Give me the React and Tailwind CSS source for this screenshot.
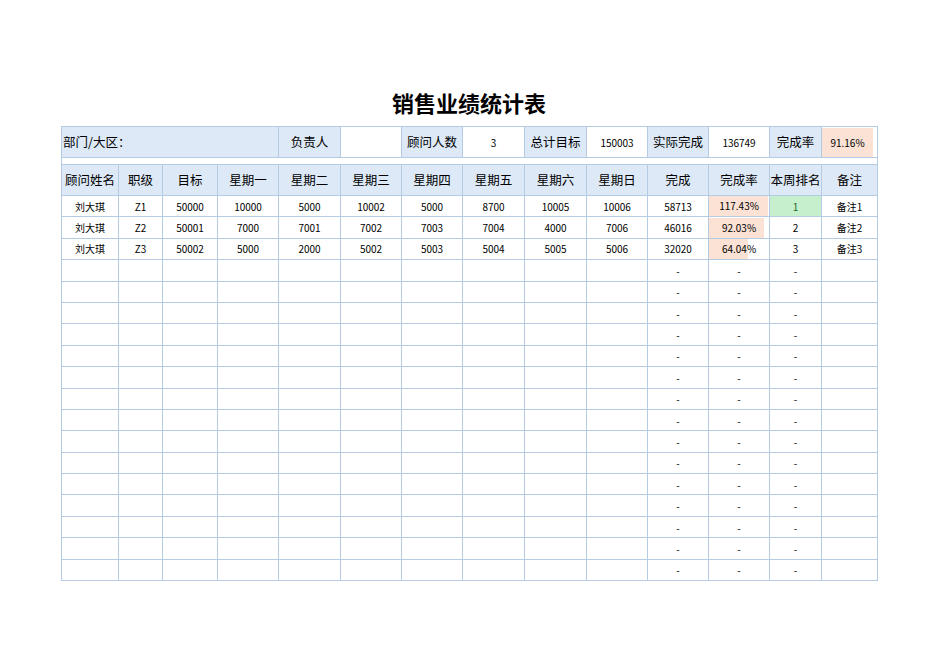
const W = [57, 44, 55, 61, 62, 61, 61, 62, 62, 61, 61, 61, 52, 56];
const HEAD = ["顾问姓名", "职级", "目标", "星期一", "星期二", "星期三", "星期四", "星期五", "星期六", "星期日", "完成", "完成率", "本周排名", "备注"];
const DATA = [
  ["刘大琪", "Z1", "50000", "10000", "5000", "10002", "5000", "8700", "10005", "10006", "58713", "117.43%", "1", "备注1", 59],
  ["刘大琪", "Z2", "50001", "7000", "7001", "7002", "7003", "7004", "4000", "7006", "46016", "92.03%", "2", "备注2", 55],
  ["刘大琪", "Z3", "50002", "5000", "2000", "5002", "5003", "5004", "5005", "5006", "32020", "64.04%", "3", "备注3", 39],
];

export default function App() {
  const bd = "border border-[#b4cbe3]";
  const hd = "bg-[#dde9f6] text-[12.5px] text-black";
  const empty = Array.from({ length: 15 });
  return (
    <div className="w-[950px] h-[672px] bg-white pt-[84px] pl-[61px]" style={{ fontFamily: '"Noto Sans CJK SC", "Noto Sans", sans-serif' }}>
      <div className="w-[816px] text-center text-[22px] font-semibold h-[42px] leading-[36px]">销售业绩统计表</div>
      <table className="border-collapse table-fixed w-[816px]">
        <colgroup>{W.map((w, i) => <col key={i} style={{ width: w }} />)}</colgroup>
        <tbody>
          <tr className="h-[31px]">
            <td colSpan={4} className={`${bd} ${hd} text-left pl-[1px]`}>部门/大区：</td>
            <td className={`${bd} ${hd} text-center`}>负责人</td>
            <td className={bd}></td>
            <td className={`${bd} ${hd} text-center`}>顾问人数</td>
            <td className={`${bd} text-center text-[10px]`}>3</td>
            <td className={`${bd} ${hd} text-center`}>总计目标</td>
            <td className={`${bd} text-center text-[10px]`}>150003</td>
            <td className={`${bd} ${hd} text-center`}>实际完成</td>
            <td className={`${bd} text-center text-[10px]`}>136749</td>
            <td className={`${bd} ${hd} text-center`}>完成率</td>
            <td className={`${bd} text-center text-[10px] p-0`}>
              <div className="h-[29px] w-[51px] bg-[#fbe2d5] leading-[29px]">91.16%</div>
            </td>
          </tr>
          <tr className="h-[7px]"><td colSpan={14} className="border-x border-[#b4cbe3]"></td></tr>
          <tr className="h-[31px]">
            {HEAD.map((h, i) => <td key={i} className={`${bd} ${hd} text-center whitespace-nowrap p-0`}>{h}</td>)}
          </tr>
          {DATA.map((r, ri) => (
            <tr key={ri} className="h-[21.4px] text-[10px] text-center">
              {r.slice(0, 14).map((c, i) => {
                if (i === 11) return (
                  <td key={i} className={`${bd} p-0`}>
                    <div className="relative h-[20px]">
                      <div className="absolute left-0 top-0 h-full bg-[#fbe2d5]" style={{ width: r[14] }} />
                      <span className="relative leading-[20px]">{c}</span>
                    </div>
                  </td>
                );
                if (i === 12 && ri === 0) return <td key={i} className={`${bd} bg-[#c6efce] text-[#1e6b2a]`}>{c}</td>;
                return <td key={i} className={`${bd} p-0`}>{c}</td>;
              })}
            </tr>
          ))}
          {empty.map((_, ri) => (
            <tr key={ri} className="h-[21.4px] text-[10px] text-center">
              {W.map((_, i) => <td key={i} className={`${bd} p-0`}>{i >= 10 && i <= 12 ? "-" : ""}</td>)}
            </tr>
          ))}
        </tbody>
      </table>
    </div>
  );
}
